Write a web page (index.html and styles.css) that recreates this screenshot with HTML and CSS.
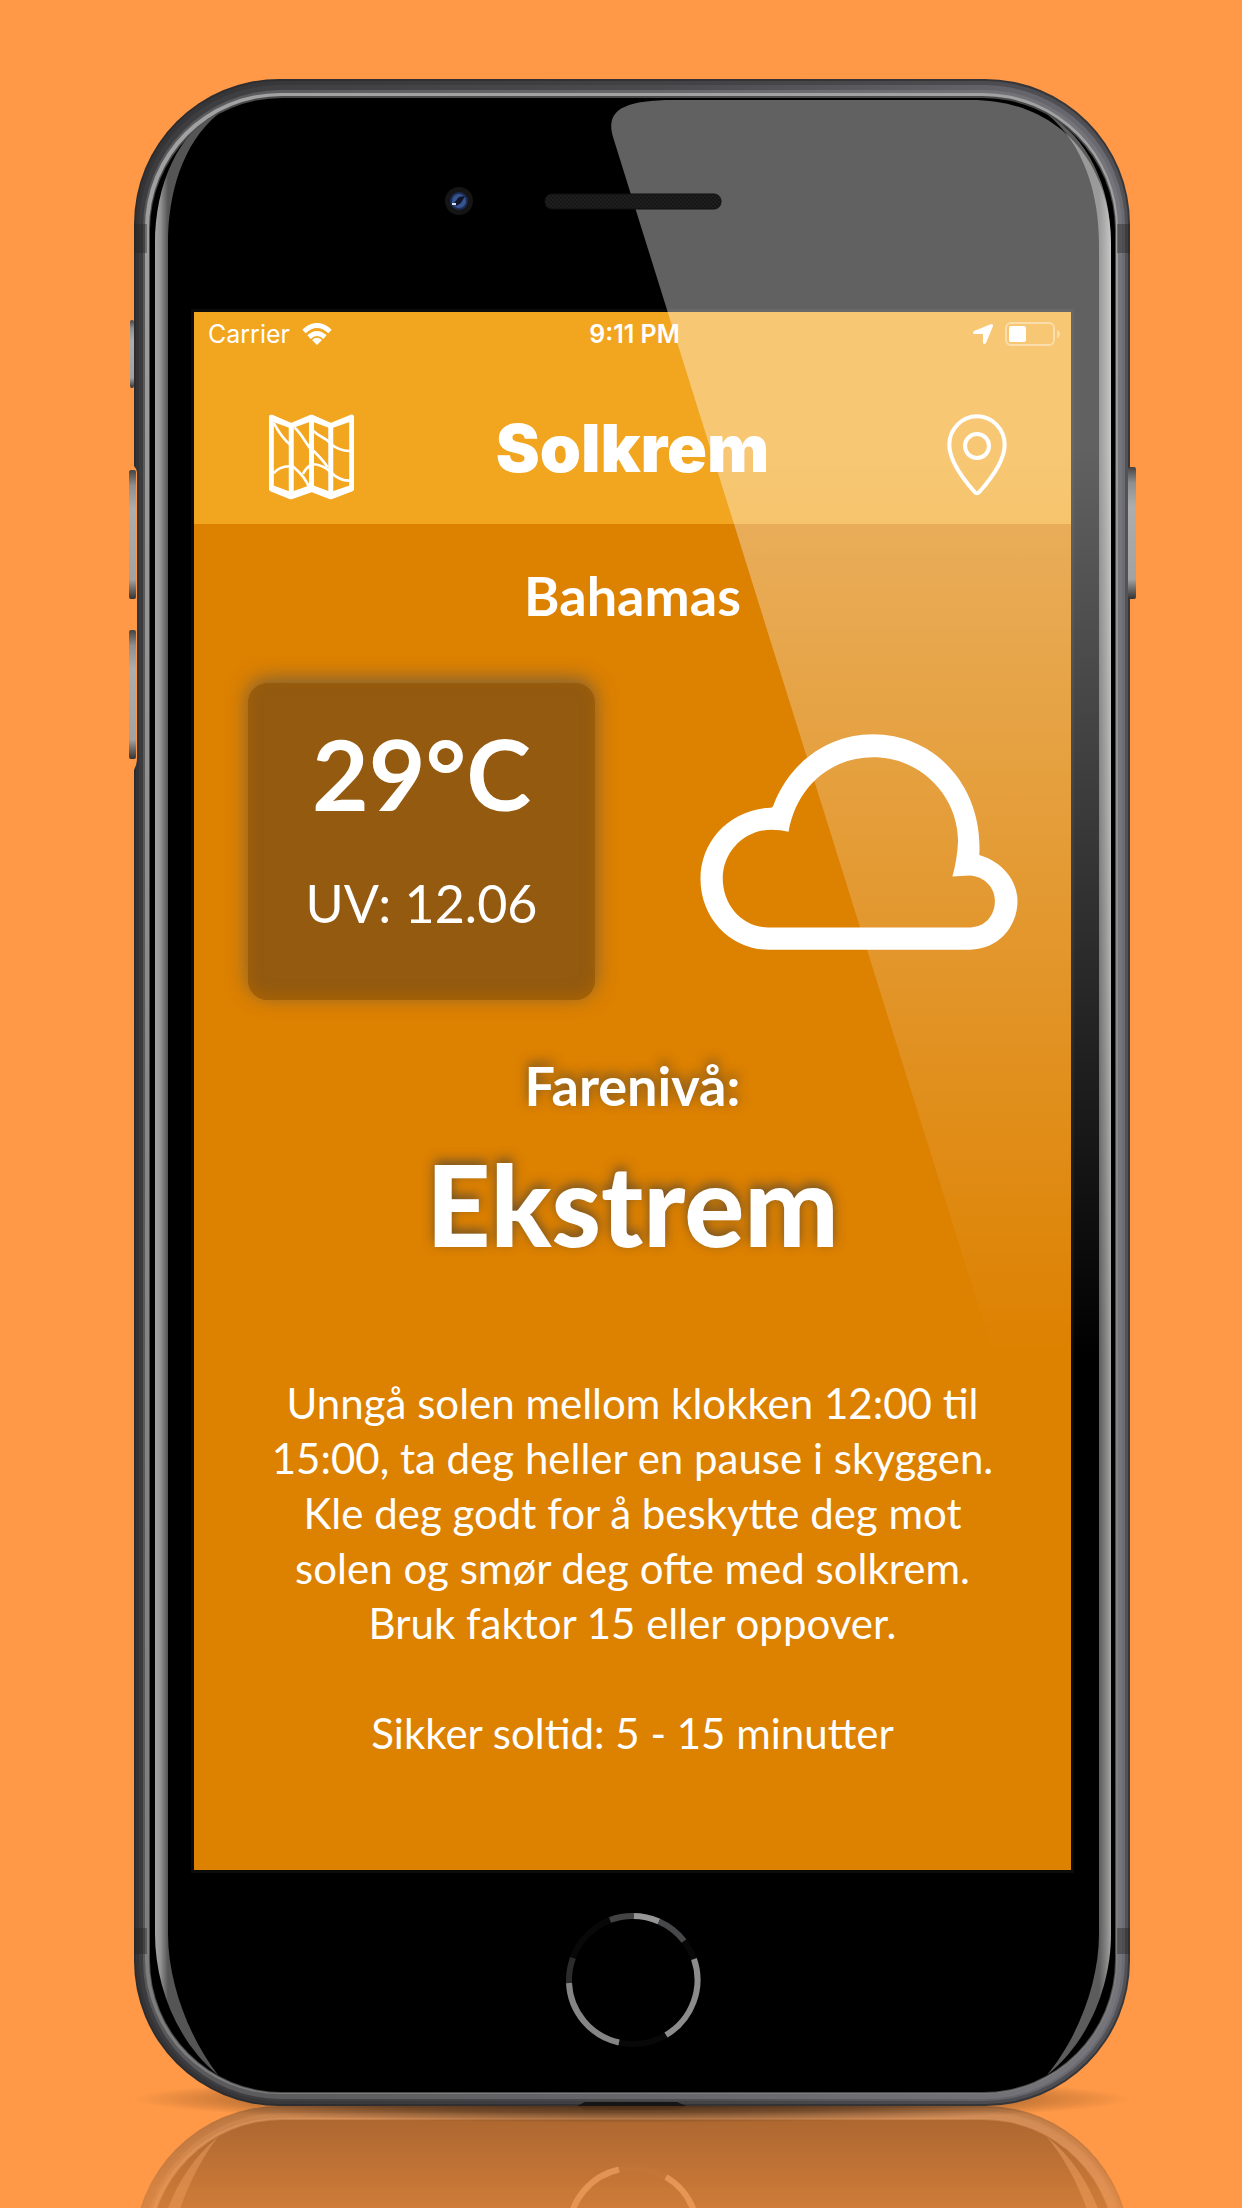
FILE: index.html
```html
<!DOCTYPE html>
<html lang="nb">
<head>
<meta charset="utf-8">
<meta name="viewport" content="width=device-width, initial-scale=1">
<title>Solkrem</title>
<link rel="stylesheet" href="styles.css">
</head>
<body>
<div class="stage">
  <div class="phone">
    <svg class="frame" viewBox="0 0 996 2027" preserveAspectRatio="none" aria-hidden="true">
      <defs>
        <linearGradient id="edge1"><stop offset="0" stop-color="#2c2c2e"/><stop offset="1" stop-color="#37373a"/></linearGradient>
        <linearGradient id="edge2"><stop offset="0" stop-color="#343436"/><stop offset=".5" stop-color="#414143"/><stop offset="1" stop-color="#515156"/></linearGradient>
        <linearGradient id="edge3"><stop offset="0" stop-color="#3c3c3f"/><stop offset=".5" stop-color="#4a4a4d"/><stop offset="1" stop-color="#6b6b72"/></linearGradient>
        <linearGradient id="edge4"><stop offset="0" stop-color="#58585a"/><stop offset="1" stop-color="#75757b"/></linearGradient>
        <linearGradient id="edge5" x2="0" y2="1"><stop offset="0" stop-color="#a2a2a2"/><stop offset=".5" stop-color="#888"/><stop offset="1" stop-color="#7c7c7c"/></linearGradient>
        <linearGradient id="key" x2="0" y2="1"><stop offset="0" stop-color="#444"/><stop offset=".12" stop-color="#8d8f90"/><stop offset=".3" stop-color="#adadad"/><stop offset=".85" stop-color="#a2a2a2"/><stop offset="1" stop-color="#333"/></linearGradient>
        <linearGradient id="rimLeft" gradientUnits="userSpaceOnUse" x1="21" y1="0" x2="34" y2="0"><stop offset="0" stop-color="#a4a4a4"/><stop offset=".4" stop-color="#949494"/><stop offset="1" stop-color="#555"/></linearGradient>
        <linearGradient id="rimRight" gradientUnits="userSpaceOnUse" x1="965" y1="0" x2="977" y2="0"><stop offset="0" stop-color="#5c5c5c"/><stop offset=".6" stop-color="#858585"/><stop offset="1" stop-color="#a4a4a4"/></linearGradient>
        <pattern id="mesh" width="4" height="4" patternUnits="userSpaceOnUse"><rect width="4" height="4" fill="#1f1f1f"/><path d="M0 0h2v2H0zM2 2h2v2H2z" fill="#161616"/></pattern>
      </defs>
      <g id="body">
        <rect width="996" height="2027" rx="145" fill="url(#edge1)"/>
        <rect x="2" y="2" width="992" height="2023" rx="143" fill="url(#edge2)"/>
        <rect x="5" y="6" width="986" height="2016" rx="141" fill="url(#edge3)"/>
        <rect x="9" y="11" width="979" height="2009" rx="138" fill="url(#edge4)"/>
        <rect x="11" y="14" width="973" height="2001" rx="135" fill="url(#edge5)"/>
        <rect x="15" y="17" width="967" height="1997" rx="133" fill="#4a4a4a"/>
        <rect x="16" y="19" width="965" height="1994" rx="132" fill="#000"/>
        <path d="M84 35C45 52 21 105 21 165V1855C21 1905 42 1962 84 1996C56 1960 34 1905 34 1855V165C34 115 48 65 84 35Z" fill="url(#rimLeft)"/>
        <path d="M913 35C953 58 977 105 977 165V1855C977 1905 956 1962 913 1996C943 1960 965 1905 965 1855V165C965 115 950 65 913 35Z" fill="url(#rimRight)"/>
        <path d="M0 145h13v29H0zM0 1849h13v26H0zM983 145h13v29h-13zM983 1849h13v26h-13z" fill="#222" opacity=".4"/>
        <path d="M443 2027l8-4h92l9 4z" fill="#151515"/>
        <g fill="none" stroke-width="6">
          <circle cx="499" cy="1901" r="64" stroke="#080808"/>
          <path d="M435 1904A64 64 0 0 0 485 1963.500" stroke="#858585"/>
          <path d="M532 1956A64 64 0 0 0 560 1880" stroke="#8c8c8c"/>
          <path d="M499 1837A64 64 0 0 1 525 1842.500" stroke="#969696"/>
          <path d="M525 1842.500A64 64 0 0 1 550 1862" stroke="#47484a"/>
          <path d="M476 1841A64 64 0 0 1 500 1837" stroke="#434343"/>
          <path d="M435 1904A64 64 0 0 1 439 1879" stroke="#2c2c2c"/>
        </g>
      </g>
      <path d="M0 387q3 3 3 8v284q0 6-3 12z" fill="#ff9947"/>
      <g fill="url(#key)">
        <rect x="-4" y="241" width="4" height="68" rx="2"/>
        <rect x="-5" y="391" width="7" height="129" rx="2"/>
        <rect x="-5" y="551" width="7" height="129" rx="2"/>
        <rect x="994" y="388" width="8" height="132" rx="2"/>
      </g>
      <circle cx="325" cy="122" r="14" fill="#151515"/>
      <circle cx="325" cy="122" r="9" fill="#1c2c55"/>
      <circle cx="325" cy="122" r="7" fill="#36548f"/>
      <path d="M320 124l5-6 6-1-4 7-5 3z" fill="#10152a"/>
      <path d="M318 124h4v2h-4z" fill="#cfe0ff"/>
    </svg>

    <main class="screen">
      <div class="top">
        <div class="status">
          <span class="carrier">Carrier
            <svg class="wifi" viewBox="0 0 30 22" aria-hidden="true"><g fill="none" stroke="#fff" stroke-width="5"><path d="M2 8.500Q15-3.500 28 8.500"/><path d="M7 14Q15 7 23 14"/></g><path d="M10 17q5-4.500 10 0l-5 5z" fill="#fff"/></svg>
          </span>
          <time class="clock">9:11 PM</time>
          <span class="power">
            <svg class="arrow" viewBox="0 0 20 20" aria-hidden="true"><path d="M19 0q1 0 1 2l-7 17q-2 2-3 0V10H1q-2-1 0-3L17 .500z" fill="#fff"/></svg>
            <svg class="battery" viewBox="0 0 56 24" aria-hidden="true"><rect x="1" y="1" width="48" height="22" rx="5" fill="none" stroke="#fff" stroke-opacity=".4" stroke-width="2"/><rect x="4" y="4" width="17" height="16" rx="2" fill="#fff"/><path d="M52 8q3 1 3 4t-3 4z" fill="#fff" fill-opacity=".4"/></svg>
          </span>
        </div>
        <header class="bar">
          <button class="icon icon-start" type="button" aria-label="Kart">
            <svg class="map" viewBox="236 340 256 258" aria-hidden="true"><g fill="none" stroke="#fff" stroke-linejoin="round"><path stroke-width="15" d="M243 349L303 374L364 349L422 374L485 349V565L422 589L364 567L302 589L243 565ZM303 374V586M364 349V567M422 374V586"/><path stroke-width="14" d="M243 354l60 22 61-22 58 22 63-22M243 560l59 22 62-22 58 22 63-22"/><path stroke-width="8" d="M250 366Q275 412 300 432M250 518Q268 495 303 497M313 380C335 400 345 425 362 445M306 495C335 520 352 540 356 562M338 520Q348 502 362 493M370 390C390 412 410 410 422 430Q450 452 480 451M370 450C390 470 405 485 412 500M368 490C390 492 405 497 422 515Q450 542 480 540"/></g></svg>
          </button>
          <h1 class="title">Solkrem</h1>
          <button class="icon icon-end" type="button" aria-label="Posisjon">
            <svg class="pin" viewBox="984 340 178 246" aria-hidden="true"><g fill="none" stroke="#fff" stroke-width="12"><path d="M1073 347C1118 347 1156 385 1156 432C1156 480 1110 540 1080 574Q1073 582 1066 574C1036 540 990 480 990 432C990 385 1028 347 1073 347Z"/><circle cx="1073" cy="436" r="36"/></g></svg>
          </button>
        </header>
      </div>

      <h2 class="place">Bahamas</h2>
      <section class="weather">
        <div class="card">
          <p class="temp">29°C</p>
          <p class="uv">UV: 12.06</p>
        </div>
        <svg class="cloud" viewBox="120 98 956 650" role="img" aria-label="Skyet"><path fill="#fff" fill-rule="evenodd" d="M332 320C210 325 121 420 121 534C121 655 215 747 325 747H932C1015 747 1075 680 1075 600C1075 540 1030 482 960 462C972 260 830 99 640 99C500 99 385 190 340 314Q338 320 332 320ZM335 386Q362 386 386 392C410 255 515 168 640 168C790 168 896 290 896 420Q894 475 879 527L930 524C975 526 1007 560 1007 600C1007 645 978 678 935 680H325C245 680 188 612 188 533C188 450 255 386 335 386Z"/></svg>
      </section>
      <section class="danger">
        <h3 class="label">Farenivå:</h3>
        <p class="level">Ekstrem</p>
      </section>
      <section class="advice">
        <p>Unngå solen mellom klokken 12:00 til<br>15:00, ta deg heller en pause i skyggen.<br>Kle deg godt for å beskytte deg mot<br>solen og smør deg ofte med solkrem.<br>Bruk faktor 15 eller oppover.</p>
        <p>Sikker soltid: 5 - 15 minutter</p>
      </section>
    </main>

    <svg class="gloss" viewBox="0 0 996 2027" preserveAspectRatio="none" aria-hidden="true">
      <defs><linearGradient id="shine" gradientUnits="userSpaceOnUse" x1="0" y1="370" x2="0" y2="1280"><stop offset="0" stop-color="#fff" stop-opacity=".38"/><stop offset="1" stop-color="#fff" stop-opacity="0"/></linearGradient></defs>
      <path d="M479 58C472 34 484 21 540 21H837C930 21 977 90 977 165V1280H861Z" fill="url(#shine)"/>
      <rect x="411" y="115" width="176" height="15" rx="7" fill="url(#mesh)" stroke="#111"/>
    </svg>
  </div>

  <svg class="reflection" viewBox="0 0 996 102" preserveAspectRatio="none" aria-hidden="true">
    <defs>
      <linearGradient id="fade" x2="0" y2="1"><stop offset="0" stop-color="#fff" stop-opacity=".34"/><stop offset="1" stop-color="#fff" stop-opacity=".19"/></linearGradient>
      <mask id="fadeMask" maskUnits="userSpaceOnUse" x="0" y="0" width="996" height="102"><rect width="996" height="102" fill="url(#fade)"/></mask>
      <radialGradient id="ground"><stop offset="0" stop-opacity=".75"/><stop offset=".6" stop-opacity=".4"/><stop offset="1" stop-opacity="0"/></radialGradient>
    </defs>
    <g mask="url(#fadeMask)"><use href="#body" transform="matrix(1 0 0 -1 0 2027)"/></g>
    <ellipse cx="498" cy="-7" rx="500" ry="24" fill="url(#ground)"/>
  </svg>
</div>
</body>
</html>
```
FILE: styles.css
```css
* {
  box-sizing: border-box;
}

body {
  margin: 0;
  background: #ff9947;
  color: #fff;
  font-family: Lato, "Open Sans", sans-serif;
}

h1, h2, h3, p {
  margin: 0;
}

.stage {
  padding: 79px 112px 0 134px;
  overflow: hidden;
}

.phone {
  position: relative;
  z-index: 1;
  padding: 233px 59px 236px 60px;
}

.frame,
.gloss {
  position: absolute;
  inset: 0;
  width: 100%;
  height: 100%;
  overflow: visible;
}

.gloss {
  pointer-events: none;
}

.reflection {
  display: block;
  width: 100%;
  height: 102px;
  overflow: visible;
}

.screen {
  position: relative;
  display: flex;
  flex-direction: column;
  aspect-ratio: 877 / 1558;
  background: #dd8100;
  box-shadow: 0 0 0 3px #0b0b0b;
}

.top {
  height: 212px;
  background: #f2a51f;
}

.status {
  display: grid;
  grid-template-columns: 1fr auto 1fr;
  align-items: center;
  height: 44px;
  padding: 0 10px 0 14px;
  font: 25px/44px Inter, sans-serif;
}

.carrier,
.power {
  display: flex;
  align-items: center;
  gap: 12px;
}

.power {
  justify-content: flex-end;
}

.clock {
  font-weight: 600;
}

.wifi {
  width: 30px;
  height: 22px;
}

.arrow {
  width: 20px;
  height: 20px;
}

.battery {
  width: 56px;
  height: 24px;
}

.bar {
  display: grid;
  grid-template-columns: 1fr auto 1fr;
  align-items: start;
  padding: 58px 64px 0;
}

.icon {
  display: flex;
  padding: 0;
  border: 0;
  background: none;
}

.icon-start {
  padding-left: 11px;
}

.icon-end {
  justify-content: flex-end;
}

.map {
  width: 85px;
  height: 86px;
}

.pin {
  width: 60px;
  height: 82px;
}

.title {
  font-family: Inter, sans-serif;
  font-size: 66px;
  font-weight: 900;
  line-height: 68px;
}

.place,
.label {
  font-size: 54px;
  font-weight: 700;
  line-height: 64px;
  text-align: center;
}

.place {
  padding-top: 40px;
}

.weather {
  display: flex;
  justify-content: space-between;
  align-items: center;
  padding: 55px 53px 0 54px;
}

.card {
  width: 347px;
  height: 317px;
  padding-top: 30px;
  border-radius: 20px;
  background: #935a10;
  box-shadow: 0 -4px 20px rgba(80, 80, 80, .7), inset 0 -5px 14px #a86204;
  text-align: center;
}

.temp {
  font-size: 98px;
  font-weight: 700;
  line-height: 120px;
}

.uv {
  margin-top: 38px;
  font-size: 52px;
  font-weight: 400;
  line-height: 64px;
}

.cloud {
  width: 318px;
  height: 216px;
}

.danger {
  padding-top: 54px;
  text-align: center;
  text-shadow: 0 -4px 12px rgba(60, 60, 60, .7);
}

.level {
  margin-top: 26px;
  font-size: 112px;
  font-weight: 900;
  line-height: 120px;
}

.advice {
  display: grid;
  gap: 55px;
  padding-top: 112px;
  font-size: 42px;
  font-weight: 400;
  line-height: 55px;
  text-align: center;
}
```
